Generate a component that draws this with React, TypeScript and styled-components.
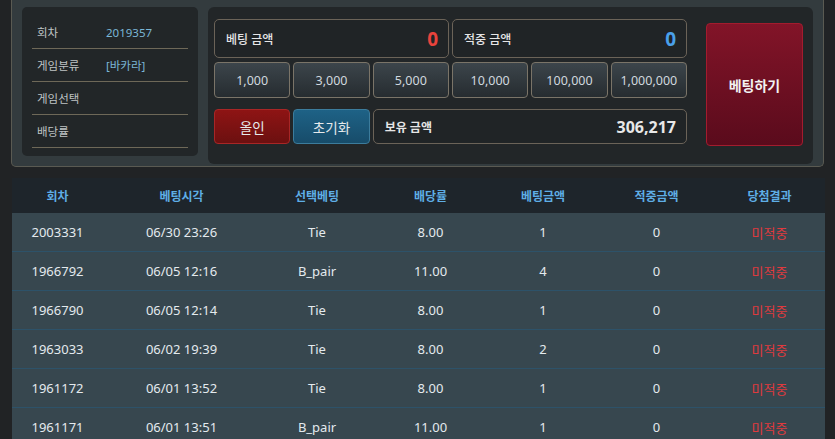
import styled, { createGlobalStyle } from "styled-components";

const GlobalStyle = createGlobalStyle`
  html, body {
    margin: 0;
    padding: 0;
    background: #212325;
    font-family: "Noto Sans", "Noto Sans CJK KR", sans-serif;
    color: #e4e8ea;
  }
`;

const Page = styled.div`
  width: 835px;
  height: 439px;
  overflow: hidden;
`;

const BetPanel = styled.div`
  margin: 0 11px;
  display: flex;
  align-items: flex-start;
  gap: 10px;
  padding: 7px 10px 2px 10px;
  background: #333b3e;
  border: 1px solid #5a5a52;
  border-top: none;
  border-radius: 0 0 5px 5px;
`;

const InfoCard = styled.div`
  width: 176px;
  height: 149px;
  box-sizing: border-box;
  padding: 9px 10px 0 10px;
  background: #222628;
  border-radius: 5px;
`;

const InfoRow = styled.div`
  display: flex;
  align-items: center;
  height: 32px;
  padding-left: 5px;
  border-bottom: 1px solid #6e6858;
  font-size: 11.5px;
`;

const InfoLabel = styled.span`
  width: 69px;
  color: #bfc3c4;
`;

const InfoValue = styled.span`
  color: #7ab6d6;
`;

const ControlBox = styled.div`
  flex: 1;
  height: 157px;
  box-sizing: border-box;
  display: flex;
  align-items: flex-start;
  padding: 12px 9px 0 6px;
  background: #222628;
  border-radius: 6px;
`;

const Controls = styled.div`
  width: 473px;
  display: grid;
  grid-template-columns: repeat(6, 1fr);
  grid-template-rows: 39px 36px 42px;
  column-gap: 3px;
  row-gap: 4px;

  & > :nth-child(n + 9) {
    margin-top: 7px;
  }
`;

const Field = styled.div<{ $span: number }>`
  grid-column: span ${(p) => p.$span};
  display: flex;
  align-items: center;
  justify-content: space-between;
  padding: 0 10px 0 11px;
  background: #202426;
  border: 1px solid #6b6358;
  border-radius: 5px;
`;

const FieldLabel = styled.span<{ $small?: boolean }>`
  font-size: 12px;
  font-weight: ${(p) => (p.$small ? 700 : 500)};
  color: #e6e6e6;
`;

const FieldValue = styled.span<{ $color?: string; $size?: number }>`
  font-size: ${(p) => p.$size ?? 19}px;
  font-weight: 700;
  color: ${(p) => p.$color ?? "#e8e8e8"};
`;

const Chip = styled.button`
  font-family: inherit;
  font-size: 12.5px;
  color: #d0d8df;
  background: linear-gradient(#3c454b, #262c30);
  border: 1px solid #7a7468;
  border-radius: 4px;
  padding: 0;
`;

const ActionButton = styled.button<{ $tone: "red" | "blue" }>`
  font-family: inherit;
  font-size: 13.5px;
  color: #e6e9eb;
  padding: 0;
  border-radius: 4px;
  border: 1px solid ${(p) => (p.$tone === "red" ? "#a82626" : "#3c7c9c")};
  background: ${(p) =>
    p.$tone === "red"
      ? "linear-gradient(#8e1414, #6c1010)"
      : "linear-gradient(#1e6286, #174c6a)"};
`;

const BetButton = styled.button`
  margin: 4px 0 0 19px;
  width: 97px;
  height: 123px;
  font-family: inherit;
  font-size: 14px;
  font-weight: 700;
  color: #f2f2f2;
  background: linear-gradient(#821428, #5a0b1c);
  border: 1px solid #a31c2e;
  border-radius: 4px;
`;

const Table = styled.div`
  margin: 11px 10px 0 12px;
`;

const cols = "91px 157px 114px 113px 112px 115px 111px";

const HeadRow = styled.div`
  display: grid;
  grid-template-columns: ${cols};
  height: 35px;
  align-items: center;
  background: #1e252b;
`;

const HeadCell = styled.div`
  text-align: center;
  font-size: 12px;
  font-weight: 700;
  color: #5eaee6;
`;

const BodyRow = styled.div`
  display: grid;
  grid-template-columns: ${cols};
  height: 38px;
  align-items: center;
  background: #37474f;
  border-bottom: 1px solid #2d5269;
`;

const Cell = styled.div<{ $miss?: boolean }>`
  text-align: center;
  font-size: 13px;
  color: ${(p) => (p.$miss ? "#e03a3e" : "#e4eaee")};
`;

const info = [
  ["회차", "2019357"],
  ["게임분류", "[바카라]"],
  ["게임선택", ""],
  ["배당률", ""],
];

const chips = ["1,000", "3,000", "5,000", "10,000", "100,000", "1,000,000"];

const headers = ["회차", "베팅시각", "선택베팅", "배당률", "베팅금액", "적중금액", "당첨결과"];

const history = [
  ["2003331", "06/30 23:26", "Tie", "8.00", "1", "0"],
  ["1966792", "06/05 12:16", "B_pair", "11.00", "4", "0"],
  ["1966790", "06/05 12:14", "Tie", "8.00", "1", "0"],
  ["1963033", "06/02 19:39", "Tie", "8.00", "2", "0"],
  ["1961172", "06/01 13:52", "Tie", "8.00", "1", "0"],
  ["1961171", "06/01 13:51", "B_pair", "11.00", "1", "0"],
];

export default function App() {
  return (
    <Page>
      <GlobalStyle />
      <BetPanel>
        <InfoCard>
          {info.map(([label, value]) => (
            <InfoRow key={label}>
              <InfoLabel>{label}</InfoLabel>
              <InfoValue>{value}</InfoValue>
            </InfoRow>
          ))}
        </InfoCard>
        <ControlBox>
          <Controls>
            <Field $span={3}>
              <FieldLabel>베팅 금액</FieldLabel>
              <FieldValue $color="#e8433c">0</FieldValue>
            </Field>
            <Field $span={3}>
              <FieldLabel>적중 금액</FieldLabel>
              <FieldValue $color="#4aa0ea">0</FieldValue>
            </Field>
            {chips.map((c) => (
              <Chip key={c}>{c}</Chip>
            ))}
            <ActionButton $tone="red">올인</ActionButton>
            <ActionButton $tone="blue">초기화</ActionButton>
            <Field $span={4}>
              <FieldLabel $small>보유 금액</FieldLabel>
              <FieldValue $size={16}>306,217</FieldValue>
            </Field>
          </Controls>
          <BetButton>베팅하기</BetButton>
        </ControlBox>
      </BetPanel>
      <Table>
        <HeadRow>
          {headers.map((h) => (
            <HeadCell key={h}>{h}</HeadCell>
          ))}
        </HeadRow>
        {history.map((row) => (
          <BodyRow key={row[0]}>
            {row.map((v, i) => (
              <Cell key={i}>{v}</Cell>
            ))}
            <Cell $miss>미적중</Cell>
          </BodyRow>
        ))}
      </Table>
    </Page>
  );
}
